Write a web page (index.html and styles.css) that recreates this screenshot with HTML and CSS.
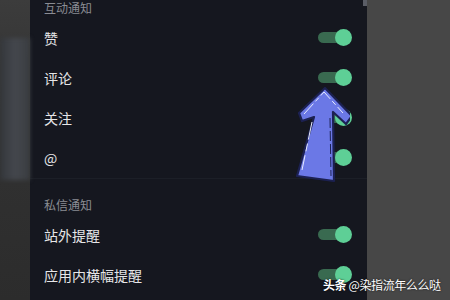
FILE: index.html
```html
<!DOCTYPE html>
<html lang="zh">
<head>
<meta charset="utf-8">
<link rel="stylesheet" href="styles.css">
</head>
<body>
<div class="screen">
  <div class="side-left"><div class="blur-block"></div></div>
  <div class="panel">
    <div class="section-title first">互动通知</div>
    <div class="row"><span class="label">赞</span><span class="toggle"></span></div>
    <div class="row"><span class="label">评论</span><span class="toggle"></span></div>
    <div class="row"><span class="label">关注</span><span class="toggle"></span></div>
    <div class="row"><span class="label">@</span><span class="toggle"></span></div>
    <div class="divider"></div>
    <div class="section-title">私信通知</div>
    <div class="row"><span class="label">站外提醒</span><span class="toggle"></span></div>
    <div class="row"><span class="label">应用内横幅提醒</span><span class="toggle"></span></div>
  </div>
  <div class="side-right"><div class="scroll-tip"></div></div>
  <svg class="arrow" width="70" height="110" viewBox="280 80 70 110">
    <polygon points="325,88 352,116 346,124 333,112 334,181 297,176 314,117 302,121 299,113" fill="#6b78e6" stroke="#1c2152" stroke-width="2.2" stroke-linejoin="round"/>
    <polyline points="304,114 324,92 343,113" fill="none" stroke="#e8ecff" stroke-width="1" stroke-dasharray="14 3 5 3"/>
    <line x1="312" y1="122" x2="302" y2="170" stroke="#e8ecff" stroke-width="1" stroke-dasharray="18 4 8 4"/>
    <line x1="330" y1="118" x2="331" y2="176" stroke="#1c2152" stroke-width="1" stroke-dasharray="10 3"/>
  </svg>
  <div class="watermark"><b>头条</b> @染指流年么么哒</div>
</div>
</body>
</html>
```
FILE: styles.css
```css
html, body {
  margin: 0;
  padding: 0;
  background: #484848;
}
.screen {
  position: relative;
  width: 450px;
  height: 300px;
  display: flex;
  overflow: hidden;
  font-family: "Noto Sans CJK SC", "Noto Sans", sans-serif;
}
.side-left {
  width: 30px;
  flex: none;
  background: linear-gradient(180deg, #3c3c3c 0%, #333 30%, #2c2c2c 100%);
  display: flex;
  flex-direction: column;
  padding-top: 38px;
}
.blur-block {
  height: 142px;
  background: linear-gradient(90deg, #34373b 0%, #44474d 50%, #3a3d41 100%);
  filter: blur(2px);
}
.panel {
  width: 337px;
  flex: none;
  background: #15171f;
  display: flex;
  flex-direction: column;
  padding: 0 15px 0 14px;
  box-sizing: border-box;
}
.section-title {
  font-size: 12px;
  line-height: 16px;
  color: #8a8c93;
  padding-top: 18px;
  height: 18px;
}
.section-title.first {
  padding-top: 0;
  height: 18px;
}
.row {
  height: 40px;
  display: flex;
  align-items: center;
  justify-content: space-between;
}
.label {
  font-size: 14px;
  color: #e6e6e8;
  line-height: 16px;
}
.toggle {
  position: relative;
  width: 34px;
  height: 17px;
  margin-top: -2px;
}
.toggle::before {
  content: "";
  position: absolute;
  left: 0;
  top: 3px;
  width: 30px;
  height: 11px;
  border-radius: 6px;
  background: #396a50;
}
.toggle::after {
  content: "";
  position: absolute;
  right: 0;
  top: 0;
  width: 17px;
  height: 17px;
  border-radius: 50%;
  background: #5ecf96;
}
.divider {
  height: 1px;
  background: #1c1f27;
  margin: 0 -15px 0 -14px;
}
.side-right {
  flex: 1;
  background: #474747;
}
.scroll-tip {
  width: 4px;
  height: 6px;
  margin-left: -4px;
  background: #5a5d66;
}
.arrow {
  position: absolute;
  left: 280px;
  top: 80px;
}
.watermark {
  position: absolute;
  left: 323px;
  top: 276px;
  font-size: 12px;
  letter-spacing: -0.4px;
  line-height: 18px;
  color: #ffffff;
  text-shadow: 0 0 2px rgba(0,0,0,0.8);
  white-space: nowrap;
}
.watermark b {
  font-weight: 700;
}
```
